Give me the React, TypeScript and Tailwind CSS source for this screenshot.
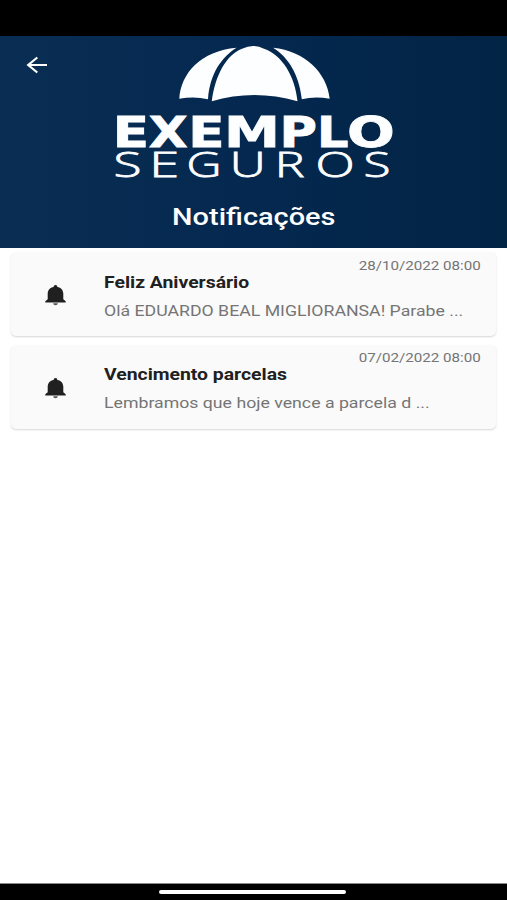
import { clsx } from 'clsx'

type Notice = {
  id: number
  title: string
  text: string
  date: string
  spacing: string
}

const notices: Notice[] = [
  {
    id: 1,
    title: 'Feliz Aniversário',
    text: 'Olá EDUARDO BEAL MIGLIORANSA! Parabe ...',
    date: '28/10/2022 08:00',
    spacing: 'pt-[5.5px]',
  },
  {
    id: 2,
    title: 'Vencimento parcelas',
    text: 'Lembramos que hoje vence a parcela d ...',
    date: '07/02/2022 08:00',
    spacing: 'pt-[4.5px]',
  },
]

// letter, left edge, advance width
const topLetters: [string, number, number][] = [
  ['E', 112.7, 36.3],
  ['X', 148.8, 38.9],
  ['E', 188.3, 36.3],
  ['M', 224, 56],
  ['P', 279.5, 37.5],
  ['L', 317.1, 31.5],
  ['O', 347, 47.8],
]
const bottomLetters: [string, number, number][] = [
  ['S', 113.5, 28],
  ['E', 149.2, 29.9],
  ['G', 186.6, 34.9],
  ['U', 229.8, 36],
  ['R', 274.8, 29.7],
  ['O', 315.6, 39.2],
  ['S', 363.6, 27],
]

function Logo() {
  return (
    <svg className="block h-[150px] w-[290px]" viewBox="109 42 290 150" fill="#fdfeff">
      {/* Umbrella */}
      <path d="M179.300 98.800C181 73 201 51 236.500 47.800C222 57 210 73 208 99.200Q194 96 179.300 98.800Z" />
      <path d="M211.800 101.200C215 76 226 55 242 48.800Q253.500 43 264 48.800C282 55 295 76 297.500 101.200Q254 89 211.800 101.200Z" />
      <path d="M273 47.800C305 51 327 73 329.700 98.800Q315 96 301.800 99.200C299 74 288 57 273 47.800Z" />
      <g fontFamily="'DejaVu Sans', sans-serif" fontSize="43.500" fontWeight="700" stroke="#fdfeff" strokeWidth="0.8">
        {topLetters.map(([letter, x, width]) => (
          <text key={x} x={x} y="147" textLength={width} lengthAdjust="spacingAndGlyphs">{letter}</text>
        ))}
      </g>
      <g fontFamily="'Open Sans', sans-serif" fontSize="35.500" fontWeight="300" stroke="#fdfeff" strokeWidth="0.8">
        {bottomLetters.map(([letter, x, width]) => (
          <text key={x} x={x} y="177.400" textLength={width} lengthAdjust="spacingAndGlyphs">{letter}</text>
        ))}
      </g>
    </svg>
  )
}

function BackIcon() {
  return (
    <svg className="block h-[18px] w-[22px]" viewBox="0 0 22 18" fill="none" stroke="#fff" strokeWidth="2.200">
      <path d="M21 9H2.500M11.300 1.500L2.200 9L11.300 16.500" />
    </svg>
  )
}

function BellIcon() {
  return (
    <svg className="block h-[21px] w-[21px]" viewBox="0 0 21 21" fill="#202020">
      <path d="M10.500 0C9.300 0 8.700.700 8.700 1.900C4.800 2.600 2.700 5.200 2.700 8.800V14.200L.300 16.200V17.500H20.700V16.200L18.300 14.200V8.800C18.300 5.200 16.200 2.600 12.300 1.900C12.300.700 11.700 0 10.500 0Z" />
      <path d="M8.200 18.300H12.800C12.800 19.500 11.800 20.200 10.500 20.200S8.200 19.500 8.200 18.300Z" fill="#555" />
    </svg>
  )
}

function NoticeCard({ notice }: { notice: Notice }) {
  return (
    <article className="flex h-[84px] rounded-[5px] bg-[#fafafa] shadow-[0_1px_2px_rgba(0,0,0,0.16)]">
      <div className="flex w-[93px] shrink-0 pl-[33.5px] pt-[33px]">
        <BellIcon />
      </div>
      <div className={clsx('flex min-w-0 flex-1 flex-col whitespace-nowrap', notice.spacing)}>
        <time className="mr-[15px] h-4 origin-right self-end scale-x-[1.165] text-[13px] leading-4 text-[#757575]">
          {notice.date}
        </time>
        <h2 className="-mt-px h-5 origin-left scale-x-[1.21] self-start text-[16px] font-bold leading-5 text-[#202020]">
          {notice.title}
        </h2>
        <p className="mt-2 h-5 origin-left scale-x-[1.18] self-start text-[15px] leading-5 text-[#757575]">
          {notice.text}
        </p>
      </div>
    </article>
  )
}

export default function App() {
  return (
    <div className="flex h-[900px] w-[507px] flex-col overflow-hidden bg-white font-[Roboto,sans-serif]">
      <div className="h-9 shrink-0 bg-black" />

      <header className="flex h-[212px] shrink-0 bg-linear-to-r from-[#0a2e53] via-[#04284f] to-[#022445]">
        <button className="flex h-10 w-[109px] shrink-0 pl-[26px] pt-5" aria-label="Voltar">
          <BackIcon />
        </button>
        <div className="flex w-[290px] flex-col items-center pt-[6px]">
          <Logo />
          <h1 className="mt-[11px] h-7 scale-x-[1.205] text-[24px] font-medium leading-7 text-white">Notificações</h1>
        </div>
      </header>

      <main className="flex flex-1 flex-col gap-[9px] px-[11px] pt-1">
        {notices.map((notice) => (
          <NoticeCard key={notice.id} notice={notice} />
        ))}
      </main>

      <footer className="flex h-[17px] shrink-0 justify-center border-t border-[#888] bg-black pr-[3px] pt-[6px]">
        <div className="h-1 w-[187px] rounded-full bg-white" />
      </footer>
    </div>
  )
}
